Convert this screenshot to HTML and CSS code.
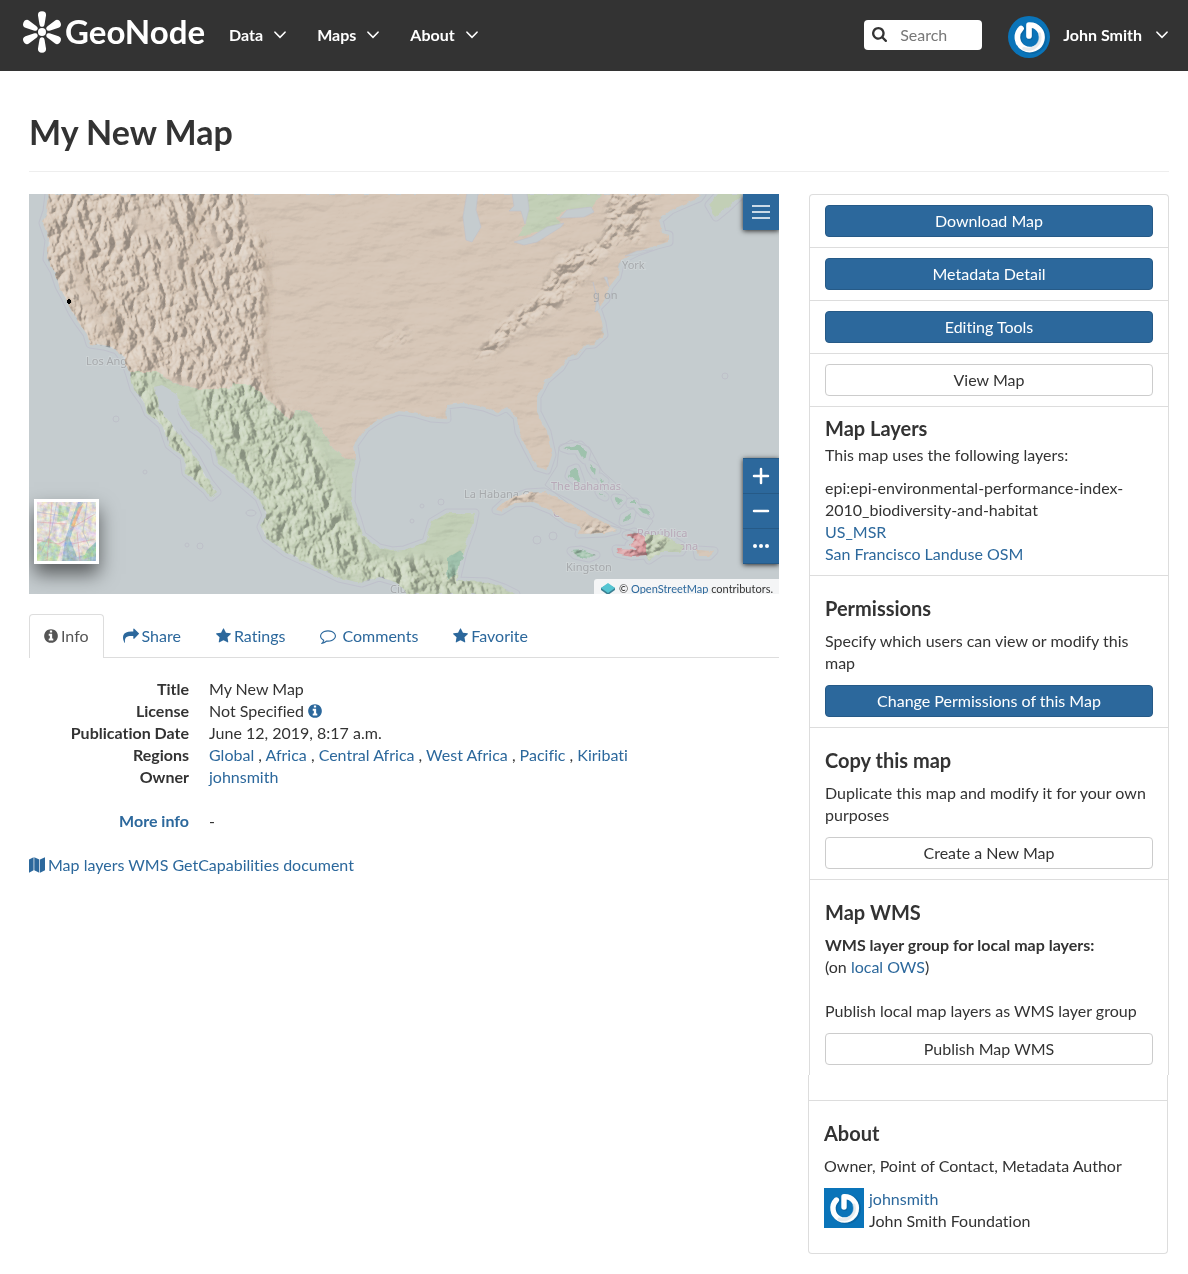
FILE: index.html
```html
<!DOCTYPE html>
<html lang="en">
<head>
<meta charset="utf-8">
<meta name="viewport" content="width=device-width, initial-scale=1">
<title>My New Map - GeoNode</title>
<link rel="stylesheet" href="styles.css">
</head>
<body>
<svg class="sprite" aria-hidden="true">
  <symbol id="i-chevron" viewBox="0 0 12 8"><path d="M1 1.2 6 6.4 11 1.2" fill="none" stroke="currentColor" stroke-width="1.6" stroke-linecap="round"/></symbol>
  <symbol id="i-search" viewBox="64 128 1664 1664"><path fill="currentColor" d="M1216 832q0-185-131.5-316.5t-316.5-131.5-316.5 131.5-131.5 316.5 131.5 316.5 316.5 131.5 316.5-131.5 131.5-316.5zm512 832q0 52-38 90t-90 38q-54 0-90-38l-343-342q-179 124-399 124-143 0-273.5-55.5t-225-150-150-225-55.5-273.5 55.5-273.5 150-225 225-150 273.5-55.5 273.5 55.5 225 150 150 225 55.5 273.5q0 220-124 399l343 343q37 37 37 90z"/></symbol>
  <symbol id="i-info" viewBox="128 0 1536 1792"><path fill="currentColor" d="M1152 1376v-160q0-14-9-23t-23-9h-96v-512q0-14-9-23t-23-9h-320q-14 0-23 9t-9 23v160q0 14 9 23t23 9h96v320h-96q-14 0-23 9t-9 23v160q0 14 9 23t23 9h448q14 0 23-9t9-23zm-128-896v-160q0-14-9-23t-23-9h-192q-14 0-23 9t-9 23v160q0 14 9 23t23 9h192q14 0 23-9t9-23zm640 416q0 209-103 385.5t-279.5 279.5-385.5 103-385.5-103-279.5-279.5-103-385.5 103-385.5 279.5-279.5 385.5-103 385.5 103 279.5 279.5 103 385.5z"/></symbol>
  <symbol id="i-share" viewBox="0 0 1792 1792"><path fill="currentColor" d="M1792 640q0 26-19 45l-512 512q-19 19-45 19t-45-19-19-45v-256h-224q-98 0-175.5 6t-154 21.5-133 42.5-105.5 69.5-80 101-48.5 138.5-17.5 181q0 55 5 123 0 6 2.5 23.5t2.5 26.5q0 15-8.5 25t-23.5 10q-16 0-28-17-7-9-13-22t-13.5-30-10.5-24q-127-285-127-451 0-199 53-333 162-403 875-403h224v-256q0-26 19-45t45-19 45 19l512 512q19 19 19 45z"/></symbol>
  <symbol id="i-star" viewBox="64 0 1664 1792"><path fill="currentColor" d="M1728 647q0 22-26 48l-363 354 86 500q1 7 1 20 0 21-10.5 35.5t-30.5 14.5q-19 0-40-12l-449-236-449 236q-22 12-40 12-21 0-31.5-14.5t-10.5-35.5q0-6 2-20l86-500-364-354q-25-27-25-48 0-37 56-46l502-73 225-455q19-41 49-41t49 41l225 455 502 73q56 9 56 46z"/></symbol>
  <symbol id="i-comment" viewBox="0 0 1792 1792"><path fill="currentColor" d="M896 384q-204 0-381.5 69.5t-282 187.5-104.5 255q0 112 71.5 213.5t201.5 175.5l87 50-27 96q-24 91-70 172 152-63 275-171l43-38 57 6q69 8 130 8 204 0 381.5-69.5t282-187.5 104.5-255-104.5-255-282-187.5-381.5-69.5zm896 512q0 174-120 321.5t-326 233-450 85.5q-70 0-145-8-198 175-460 242-49 14-114 22h-5q-15 0-27-10.5t-16-27.5v-1q-3-4-.5-12t2-10 4.5-9.5l6-9 7-8.5 8-9q7-8 31-34.5t34.5-38 31-39.5 32.5-51 27-59 26-76q-157-89-247.5-220t-90.5-281q0-174 120-321.5t326-233 450-85.5 450 85.5 326 233 120 321.5z"/></symbol>
  <symbol id="i-map" viewBox="0 0 16 16"><path fill="currentColor" d="M0 2.6 4.6.2v13L0 15.8zM5.3.2l5 2.4v13.2l-5-2.5zM11 2.6 16 .2v13l-5 2.6z"/></symbol>
  <symbol id="i-power" viewBox="0 0 40 40">
    <rect width="40" height="40" fill="#0a74b9"/>
    <path d="M13.2 11.4A12 12 0 1 0 20 8.2V19" transform="translate(.6 1)" fill="none" stroke="#075a92" stroke-opacity=".5" stroke-width="6" stroke-linecap="round" stroke-linejoin="round"/>
    <path d="M12.4 12A11.7 11.7 0 1 0 20 8.6V19" fill="none" stroke="#fff" stroke-width="5.4" stroke-linecap="round" stroke-linejoin="round"/>
    <path d="M30 17A11.5 11.5 0 0 1 15 31" fill="none" stroke="#d5dde3" stroke-opacity=".6" stroke-width="3" stroke-linecap="round"/>
  </symbol>
</svg>

<header class="navbar">
  <a class="brand" href="#">
    <svg class="brand-mark" viewBox="0 0 40 42" aria-hidden="true">
      <defs><path id="petal" d="M20 15.800C18.400 15.800 17.800 15 17.400 13L16 4.400C15.600 1.800 17.200.2 20 .2S24.400 1.800 24 4.400L22.600 13C22.200 15 21.600 15.800 20 15.800z"/></defs>
      <g fill="#fff">
        <use href="#petal"/><use href="#petal" transform="rotate(62 20 21)"/><use href="#petal" transform="rotate(118 20 21)"/>
        <use href="#petal" transform="rotate(180 20 21)"/><use href="#petal" transform="rotate(242 20 21)"/><use href="#petal" transform="rotate(298 20 21)"/>
        <circle cx="20" cy="21" r="4"/>
      </g>
    </svg>
    <span>GeoNode</span>
  </a>
  <nav class="menu">
    <button type="button">Data <svg class="chevron"><use href="#i-chevron"/></svg></button>
    <button type="button">Maps <svg class="chevron"><use href="#i-chevron"/></svg></button>
    <button type="button">About <svg class="chevron"><use href="#i-chevron"/></svg></button>
  </nav>
  <form class="search">
    <label for="q" aria-label="Search"><svg width="15" height="15"><use href="#i-search"/></svg></label>
    <input id="q" type="search" placeholder="Search">
  </form>
  <button type="button" class="user">
    <svg class="avatar-round"><use href="#i-power"/></svg>
    <span class="user-name">John Smith <svg class="chevron"><use href="#i-chevron"/></svg></span>
  </button>
</header>

<main class="page">
  <h1>My New Map</h1>
  <div class="columns">
    <section class="primary">
      <div class="map">
        <svg class="map-canvas" viewBox="0 0 750 400" preserveAspectRatio="xMidYMid slice" role="img" aria-label="Map of North America">
          <defs>
            <path id="usa" d="M20 0 18 17 14 29 20 46 18 65 25 77 30 92 36 103 43 118 50 129 58 140 61 150 75 152 88 156 95 165 100 178 128 178 145 189 170 195 200 195 203 190 221 190 235 201 247 214 260 225 267 216 278 217 288 228 302 251 313 263 327 266 325 251 337 234 353 223 370 217 385 219 402 224 418 225 417 211 435 209 455 213 468 218 478 213 488 223 490 238 498 254 508 273 518 276 523 261 518 238 508 218 508 203 517 186 532 173 538 163 547 161 555 151 565 150 575 141 573 129 568 114 577 105 580 93 588 83 592 66 608 58 628 51 640 48 640 41 633 39 630 26 642 16 658 9 670 4 673 0z"/>
            <path id="mexico" d="M100 178 105 195 115 209 119 219 133 231 140 251 155 263 157 279 177 296 182 303 188 298 180 288 167 264 154 246 143 231 130 214 125 193 133 191 147 199 153 218 163 234 173 241 185 254 188 268 207 284 230 304 237 321 232 333 237 344 257 359 283 371 310 384 333 389 350 383 367 388 380 400 487 400 475 394 458 388 427 387 434 358 443 333 446 319 418 319 403 328 397 348 375 356 363 357 350 354 333 341 328 324 322 308 323 284 327 266 313 263 302 251 288 228 278 217 267 216 260 225 247 214 235 201 221 190 203 190 200 195 170 195 145 189 128 178z"/>
            <path id="ontario" d="M498 0 497 29 488 43 508 39 532 29 527 24 538 16 562 13 573 0z"/>
            <path id="scotia" d="M680 11 690 0H713L698 14 687 23z"/>
            <path id="cuba" d="M467 316 478 306 498 299 515 298 532 306 555 318 575 329 588 336 575 339 550 340 552 333 538 328 522 316 502 308 485 309 472 317z"/>
            <path id="haiti" d="M597 341 605 338 617 343V361L603 362 588 359 587 355 608 356 600 351 606 346z"/>
            <path id="dominica" d="M617 341 635 341 655 353 652 358 632 358 620 366 617 361z"/>
            <path id="puerto" d="M668 356 685 357 680 362H669z"/>
            <path id="jamaica" d="M542 357 552 356 567 361 560 364 546 361z"/>
            <path id="belize" d="M418 364 432 356 434 362 427 381 418 386z"/>
            <path id="bahamas" d="M534 254 544 253 551 251 558 258 556 266 552 262 549 256 540 256zM542 276 547 274 552 288 546 287 540 282zM560 270 567 275 566 281 562 275zM571 283 576 287 574 289zM586 304 594 305 589 311zM595 323 603 319 601 326 594 328zM609 314 618 315 621 321 614 319zM570 298 576 303 572 301zM601 308H606V310H601z"/>
            <g id="land"><use href="#usa"/><use href="#mexico"/><use href="#ontario"/><use href="#scotia"/><use href="#cuba"/><use href="#haiti"/><use href="#dominica"/><use href="#puerto"/><use href="#jamaica"/><use href="#bahamas"/></g>
            <clipPath id="landClip"><use href="#usa"/><use href="#mexico"/><use href="#cuba"/><use href="#haiti"/><use href="#dominica"/><use href="#puerto"/><use href="#jamaica"/></clipPath>
            <filter id="soft" x="-20%" y="-20%" width="140%" height="140%"><feGaussianBlur stdDeviation="5"/></filter>
            <filter id="thin" x="-20%" y="-20%" width="140%" height="140%"><feGaussianBlur stdDeviation="3"/></filter>
            <filter id="rough" x="-5%" y="-5%" width="110%" height="110%"><feTurbulence type="fractalNoise" baseFrequency=".12" numOctaves="2" seed="2"/><feDisplacementMap in="SourceGraphic" scale="5" xChannelSelector="R" yChannelSelector="G"/></filter>
            <filter id="relief" x="0" y="0" width="100%" height="100%" color-interpolation-filters="sRGB">
              <feTurbulence type="turbulence" baseFrequency=".06 .045" numOctaves="4" seed="8"/>
              <feDiffuseLighting surfaceScale="5" diffuseConstant="1.150" lighting-color="#fff8ee"><feDistantLight azimuth="215" elevation="32"/></feDiffuseLighting>
            </filter>
            <filter id="plain" x="0" y="0" width="100%" height="100%" color-interpolation-filters="sRGB">
              <feTurbulence type="fractalNoise" baseFrequency=".02 .05" numOctaves="5" seed="3"/>
              <feDiffuseLighting surfaceScale="3" diffuseConstant="1.050" lighting-color="#fff"><feDistantLight azimuth="225" elevation="30"/></feDiffuseLighting>
            </filter>
            <mask id="ranges" maskUnits="userSpaceOnUse" x="0" y="0" width="750" height="400">
              <g fill="#fff" filter="url(#soft)">
                <path d="M10-10H215L218 30 236 45 237 100 232 160 244 215 190 192 110 180 60 155 10 70z" fill-opacity=".9"/>
                <path d="M95 170 115 180 190 300 175 300 110 210z"/>
                <path d="M165 190 235 200 275 225 312 305 340 355 350 390 260 365 225 335 235 310 180 245z" fill-opacity=".9"/>
                <path d="M340 365 400 365 480 400H350z"/>
              </g>
              <g filter="url(#thin)"><path d="M42 72 50 75 82 142 74 145 46 95zM100 15 145 30 130 42 105 38zM180 30 195 45 185 58 178 50zM135 60 148 58 146 85 137 80z" fill-opacity=".8"/></g>
            </mask>
            <mask id="east" maskUnits="userSpaceOnUse" x="0" y="0" width="750" height="400">
              <g fill="#fff" filter="url(#thin)"><path d="M580-5H625L612 50 592 45 555 85 535 110 500 130 465 160 444 166 470 130 510 100 530 62 575 45z" fill-opacity=".8"/><path d="M345 146 380 132V150L350 156z" fill-opacity=".35"/><path d="M480 296H515L500 306 478 310zM555 330H590V342H552zM585 338H660L650 358 620 366 585 360zM665 355H688V363H665zM540 355H568V366H540z"/></g>
            </mask>
            <filter id="thumbNoise" x="0" y="0" width="100%" height="100%" color-interpolation-filters="sRGB"><feTurbulence type="fractalNoise" baseFrequency=".2" numOctaves="3" seed="5"/><feColorMatrix values=".7 .3 0 0 .3  .3 .7 .1 0 .25  .2 0 .9 0 .25  0 0 0 0 .4"/></filter>
          </defs>
          <rect width="750" height="400" fill="#c5cccf"/>
          <g fill="none" stroke-linejoin="round">
            <use href="#land" stroke="#bfc1cb" stroke-width="9"/>
            <use href="#land" stroke="#c5cccf" stroke-width="7"/>
            <g stroke="#bec0c9"><path d="M530 253 542 246 560 253 573 277 608 308 624 327 615 340 575 330 540 310 516 291 528 272z"/><circle cx="87" cy="225" r="3"/><circle cx="116" cy="278" r="2"/><circle cx="158" cy="351" r="2"/><circle cx="171" cy="352" r="3"/><ellipse cx="222" cy="319" rx="5" ry="3"/><circle cx="696" cy="182" r="3"/><circle cx="412" cy="308" r="3"/><circle cx="383" cy="327" r="2"/><circle cx="524" cy="342" r="4"/><circle cx="508" cy="346" r="4"/><circle cx="393" cy="312" r="2"/></g>
          </g>
          <g class="map-labels" stroke-width="2" paint-order="stroke">
            <text x="57" y="171">Los Ang</text><text x="593" y="75">York</text>
            <text x="435" y="304">La Habana ⊙</text><text x="361" y="399">Ciu</text><text x="537" y="377">Kingston</text>
            <g fill="#b8a9b8"><text x="522" y="296">The Bahamas</text><text x="524" y="323">Cuba</text><text x="608" y="343">República</text><text x="650" y="356">ana</text></g>
          </g>
          <g filter="url(#rough)">
            <g fill="#d6c6b7"><use href="#usa"/><use href="#cuba"/><use href="#puerto"/></g>
            <g fill="#c2cfb6"><use href="#mexico"/><use href="#ontario"/><use href="#scotia"/><use href="#dominica"/></g>
            <use href="#haiti" fill="#d99a9f"/>
            <g fill="#9fc2ad"><use href="#jamaica"/><use href="#bahamas"/><use href="#belize"/></g>
          </g>
          <g class="blend faint" clip-path="url(#landClip)"><rect width="750" height="400" filter="url(#plain)"/></g>
          <g class="blend strong" clip-path="url(#landClip)"><g mask="url(#ranges)"><rect x="-200" y="-250" width="900" height="900" filter="url(#relief)" transform="rotate(-16 200 200)"/></g></g>
          <g class="blend strong" clip-path="url(#landClip)"><g mask="url(#east)"><rect x="-420" y="-300" width="1100" height="1100" filter="url(#relief)" transform="rotate(38 400 200)"/></g></g>
          <g fill="#c5cccf" stroke="#bfc1cb" stroke-width=".6">
            <path d="M438-1 434 23 437 46 443 48 452 33 447 16 449-1zM483-1 485 12 480 17 492 17 496 30 500 15 498-1zM485 48 495 51 508 48 532 33 535 29 518 33 502 43zM531 24 538 16 562 13 565 18 555 23zM564 88 568 103 566 118 571 114 567 100zM575 83 580 93 578 83zM596 62 608 57 624 56 606 61z"/>
            <path d="M127 194 132 214 138 222 152 238 146 202 133 192z" stroke="none"/>
          </g>
          <g fill="none" stroke="#a58d75" stroke-opacity=".5" stroke-width="3" filter="url(#thin)"><path d="M46 65 62 90 80 118 88 148M172 10 166 55 163 90M233 40 239 90 234 160 242 205"/></g>
          <g class="map-labels bare"><text x="564" y="105">g</text><text x="575" y="105">on</text></g>
          <path d="M39 105h2v1h1v3h-1v1h-2v-1h-1v-3h1z"/>
        </svg>
        <button type="button" class="map-button map-menu" aria-label="Map menu"><svg viewBox="0 0 18 14" width="18" height="14"><path d="M0 1h18M0 7h18M0 13h18" stroke="#fff" stroke-width="1.500"/></svg></button>
        <div class="map-zoom">
          <button type="button" class="map-button" aria-label="Zoom in"><svg viewBox="0 0 18 18" width="18" height="18"><path d="M2 9h14M9 2v14" stroke="#fff" stroke-width="2.500" stroke-linecap="round"/></svg></button>
          <button type="button" class="map-button" aria-label="Zoom out"><svg viewBox="0 0 18 18" width="18" height="18"><path d="M2 9h14" stroke="#fff" stroke-width="2.500" stroke-linecap="round"/></svg></button>
          <button type="button" class="map-button" aria-label="More tools"><svg viewBox="0 0 18 18" width="18" height="18" fill="#fff"><circle cx="3" cy="9" r="2"/><circle cx="9" cy="9" r="2"/><circle cx="15" cy="9" r="2"/></svg></button>
        </div>
        <button type="button" class="map-base" aria-label="Background layer">
          <svg viewBox="0 0 59 59"><rect width="59" height="59" fill="#efe6df"/><path d="M22 3 33 5 30 18 20 20zM0 42 12 36 24 45 20 59H0z" fill="#b5dcae"/><path d="M41 0H46L37 25 33 37 40 55 59 50V59H25L28 38 34 19z" fill="#8fb6c6"/><path d="M46 3 37 25 34 24 42 5z" fill="#f5a97c"/><path d="M50 48 59 40V54L46 57z" fill="#8fcf96"/><rect width="59" height="59" filter="url(#thumbNoise)"/><path d="M0 38 22 42 29 38M33 27 58 12M35 42 58 37M40 30 43 59M15 0 10 59M0 20 30 22" fill="none" stroke="#d98f98" stroke-opacity=".4"/><path d="M0 10 25 14M20 0 14 30 4 50M50 0 46 30 52 44" fill="none" stroke="#8e9fd0" stroke-opacity=".4"/></svg>
        </button>
        <div class="attribution"><svg viewBox="0 0 14 12" width="14" height="12" preserveAspectRatio="none"><path d="M0 5 7 1 14 5V7L7 12 0 7z" fill="#3b7f92"/><path d="M7 0 14 5 7 10 0 5z" fill="#55c5d2"/></svg><span>© <a href="#">OpenStreetMap</a> contributors.</span></div>
      </div>

      <nav class="tabs">
        <a class="active" href="#info"><svg class="i14"><use href="#i-info"/></svg>Info</a>
        <a href="#share"><svg class="i16"><use href="#i-share"/></svg>Share</a>
        <a href="#rate"><svg class="i15"><use href="#i-star"/></svg>Ratings</a>
        <a href="#comments" class="wide-icon"><svg class="i16"><use href="#i-comment"/></svg>Comments</a>
        <a href="#favorite"><svg class="i15"><use href="#i-star"/></svg>Favorite</a>
      </nav>

      <dl class="details" id="info">
        <dt>Title</dt><dd>My New Map</dd>
        <dt>License</dt><dd>Not Specified <a href="#" aria-label="License details"><svg class="i14"><use href="#i-info"/></svg></a></dd>
        <dt>Publication Date</dt><dd>June 12, 2019, 8:17 a.m.</dd>
        <dt>Regions</dt><dd><a href="#">Global</a> , <a href="#">Africa</a> , <a href="#">Central Africa</a> , <a href="#">West Africa</a> , <a href="#">Pacific</a> , <a href="#">Kiribati</a></dd>
        <dt>Owner</dt><dd><a href="#">johnsmith</a></dd>
      </dl>
      <dl class="details">
        <dt><a href="#">More info</a></dt><dd>-</dd>
      </dl>
      <p class="capabilities"><a href="#"><svg class="i16"><use href="#i-map"/></svg>Map layers WMS GetCapabilities document</a></p>
    </section>

    <aside>
      <ul class="panel">
        <li><button type="button" class="btn primary-btn">Download Map</button></li>
        <li><button type="button" class="btn primary-btn">Metadata Detail</button></li>
        <li><button type="button" class="btn primary-btn">Editing Tools</button></li>
        <li><button type="button" class="btn">View Map</button></li>
        <li class="layers">
          <h2>Map Layers</h2>
          <p>This map uses the following layers:</p>
          <div>epi:epi-environmental-performance-index-2010_biodiversity-and-habitat</div>
          <div><a href="#">US_MSR</a></div>
          <div><a href="#">San Francisco Landuse OSM</a></div>
        </li>
        <li>
          <h2>Permissions</h2>
          <p>Specify which users can view or modify this map</p>
          <button type="button" class="btn primary-btn">Change Permissions of this Map</button>
        </li>
        <li>
          <h2>Copy this map</h2>
          <p>Duplicate this map and modify it for your own purposes</p>
          <button type="button" class="btn">Create a New Map</button>
        </li>
        <li>
          <h2>Map WMS</h2>
          <p><strong>WMS layer group for local map layers:</strong><br>(on <a href="#">local OWS</a>)<br><br>Publish local map layers as WMS layer group</p>
          <button type="button" class="btn">Publish Map WMS</button>
        </li>
      </ul>
      <ul class="panel panel-about">
        <li>
          <h2>About</h2>
          <p>Owner, Point of Contact, Metadata Author</p>
          <div class="owner">
            <svg class="avatar"><use href="#i-power"/></svg>
            <div><a href="#">johnsmith</a><br>John Smith Foundation</div>
          </div>
        </li>
      </ul>
    </aside>
  </div>
</main>
</body>
</html>
```
FILE: styles.css
```css
* { box-sizing: border-box; }

body {
  margin: 0;
  background: #fff;
  color: #333;
  font: 16px/22px Lato, "Liberation Sans", sans-serif;
  font-variant-ligatures: no-common-ligatures;
}

a { color: #2c689c; text-decoration: none; }
button, input { font: inherit; font-variant-ligatures: inherit; }
button { cursor: pointer; }
h1, h2, p, ul, dl, dd { margin: 0; padding: 0; }
.sprite { position: absolute; width: 0; height: 0; }

/* Top bar */
.navbar {
  display: flex;
  align-items: center;
  height: 71px;
  padding: 0 20px 2px 22px;
  background: #333;
  color: #fff;
}
.brand {
  display: flex;
  align-items: center;
  gap: 3px;
  padding-bottom: 6px;
  color: #fff;
  font-size: 33px;
  font-weight: 700;
  line-height: 40px;
}
.brand-mark { width: 40px; height: 42px; }
.brand span { padding-bottom: 2px; }
.menu { display: flex; gap: 31px; margin: 0 auto 0 24px; }
.menu button, .user, .user-name {
  display: flex;
  align-items: center;
  gap: 11px;
  padding: 0;
  border: 0;
  background: none;
  color: #fff;
  font-weight: 700;
}
.chevron { width: 12px; height: 8px; }
.search {
  display: flex;
  align-items: center;
  width: 118px;
  height: 30px;
  padding-left: 8px;
  border-radius: 4px;
  background: #fff;
  color: #333;
}
.search label { display: flex; }
.search input {
  width: 80px;
  margin-left: 13px;
  padding: 0;
  border: 0;
  outline: 0;
  background: none;
}
.search input::placeholder { color: #777; }
.user { gap: 13px; margin: 4px 0 0 26px; }
.user-name { gap: 14px; padding-bottom: 4px; }
.avatar-round { width: 42px; height: 42px; border-radius: 50%; }

/* Page frame */
.page { padding: 41px 19px 20px 29px; }
h1 {
  margin-bottom: 22px;
  padding-bottom: 19px;
  border-bottom: 1px solid #eee;
  font-size: 34px;
  line-height: 40px;
}
.columns {
  display: grid;
  grid-template-columns: minmax(0, 25fr) minmax(0, 12fr);
  gap: 30px;
  align-items: start;
}

/* Map */
.map { position: relative; aspect-ratio: 15 / 8; overflow: hidden; }
.map-canvas { display: block; width: 100%; height: 100%; }
.map-labels { fill: #a6a9ac; stroke: #cdd3d5; font: 11px "Noto Sans", sans-serif; }
.map-labels.bare { stroke: none; }
.blend { mix-blend-mode: hard-light; }
.faint { opacity: .1; }
.strong { opacity: .32; }
.map-button {
  display: flex;
  align-items: center;
  justify-content: center;
  width: 36px;
  height: 35px;
  padding: 0;
  border: 0;
  border-bottom: 1px solid #265a87;
  background: #2c689c;
}
.map-menu, .map-zoom { position: absolute; right: 0; box-shadow: 0 1px 5px rgba(0, 0, 0, .8); }
.map-menu { top: 0; height: 36px; border-bottom: 0; }
.map-zoom { bottom: 30px; border-top: 1px solid #265a87; }
.map-base {
  position: absolute;
  left: 5px;
  bottom: 30px;
  width: 65px;
  height: 65px;
  padding: 0;
  border: 3px solid #fff;
  background: #fff;
  box-shadow: 0 10px 18px rgba(0, 0, 0, .55);
}
.map-base svg { display: block; }
.attribution {
  position: absolute;
  right: 0;
  bottom: 0;
  display: flex;
  align-items: center;
  gap: 4px;
  height: 15px;
  padding: 4px 6px 0 7px;
  border-top-left-radius: 3px;
  background: rgba(255, 255, 255, .8);
  font-size: 11px;
  line-height: 15px;
}
.attribution svg { flex: none; }

/* Tabs */
.tabs { display: flex; gap: 3px; margin: 20px 0; border-bottom: 1px solid #ddd; }
.tabs a {
  height: 43px;
  padding: 10px 15px;
  border: 1px solid transparent;
  border-bottom: 0;
  border-radius: 4px 4px 0 0;
}
.tabs .active {
  height: 44px;
  margin-bottom: -1px;
  padding: 10px 14px;
  border-color: #ddd;
  background: #fff;
  color: #555;
}
.tabs svg, .capabilities svg { margin-right: 3px; }
.tabs .wide-icon svg { margin-right: 6px; }
.i14, .i15, .i16 { height: 16px; vertical-align: -2px; }
.i14 { width: 14px; }
.i15 { width: 15px; }
.i16 { width: 16px; }

/* Details */
.details {
  display: grid;
  grid-template-columns: 160px minmax(0, 1fr);
  column-gap: 20px;
  margin-bottom: 22px;
}
.details dt { font-weight: 700; text-align: right; }

/* Side panel */
.panel { border: 1px solid #ddd; border-bottom: 0; border-radius: 4px 4px 0 0; list-style: none; }
.panel li { padding: 10px 15px; }
.panel li + li { border-top: 1px solid #ddd; }
.panel h2 { margin: 11px 0; font-size: 20px; line-height: 22px; }
.panel p { margin-bottom: 11px; }
.panel .layers h2 { margin: 0 0 5px; }
.btn {
  display: block;
  width: 100%;
  height: 32px;
  padding: 0 12px;
  border: 1px solid #ccc;
  border-radius: 4px;
  background: #fff;
  color: #333;
}
.primary-btn { border-color: #265a87; background: #2c689c; color: #fff; }
.panel-about {
  margin: 0 1px 0 -1px;
  padding-top: 25px;
  border-top: 0;
  border-bottom: 1px solid #ddd;
  border-radius: 0 0 4px 4px;
}
.panel-about li { padding-bottom: 21px; border-top: 1px solid #ddd; }
.owner { display: flex; gap: 5px; }
.avatar { width: 40px; height: 40px; }
```
